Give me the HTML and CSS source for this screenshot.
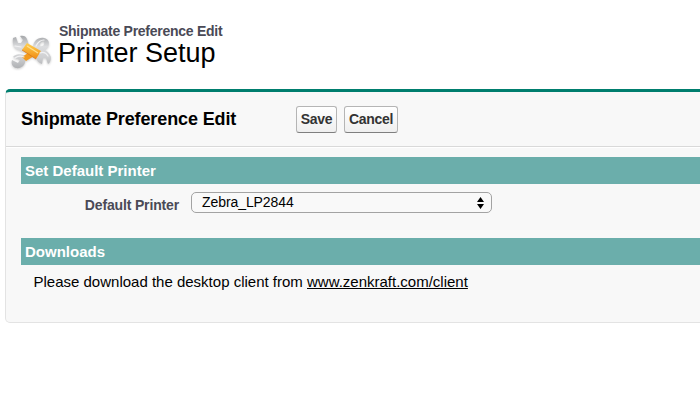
FILE: index.html
```html
<!DOCTYPE html>
<html lang="en">
<head>
<meta charset="utf-8">
<title>Printer Setup</title>
<link rel="stylesheet" href="styles.css">
</head>
<body>
<header class="page-header">
  <svg class="tools" viewBox="0 0 42 36" width="42" height="36" aria-hidden="true">
    <defs>
      <linearGradient id="steel" x1="0" y1="0" x2="0" y2="36" gradientUnits="userSpaceOnUse">
        <stop offset="0" stop-color="#9c9ea1"/><stop offset=".35" stop-color="#dcdddf"/><stop offset=".65" stop-color="#cfd0d2"/><stop offset="1" stop-color="#a9abae"/>
      </linearGradient>
      <linearGradient id="grip" x1="0" y1="0" x2="0" y2="1">
        <stop offset="0" stop-color="#ffcf50"/><stop offset="1" stop-color="#f08c14"/>
      </linearGradient>
    </defs>
    <path d="M23 14C23 7 28 3 34 4C39 5 40 9 38 13C36 16 31 18 27 18ZM30 10C29 12 30 13 32 12C34 12 35 10 34 8C33 7 31 8 30 10Z" fill="url(#steel)" fill-rule="evenodd"/>
    <path d="M15 26C16 31 11 35 6 34C2 33 1 29 2 26L8 29L10 26L3 23C6 19 12 20 16 22Z" fill="url(#steel)"/>
    <path d="M12 23L24 15L29 19L16 27Z" fill="#f29a1e"/>
    <path d="M3 4C2 11 4 15 9 16L13 18L19 11L17 5C16 2 13 1 10 2L13 6L11 9L8 9L6 3Z" fill="url(#steel)"/>
    <path d="M24 24L29 17C35 14 39 18 41 23C41 26 40 29 38 30L36 24L33 24L32 30C29 29 27 27 26 24Z" fill="url(#steel)"/>
    <path d="M17 9L31 17L26 25L12 16Z" fill="url(#grip)"/>
    <path d="M17 12L28 19" stroke="#ffe08a" stroke-width="1.3"/>
    <path d="M12 16L26 25" stroke="#d9781a" stroke-width=".8"/>
    <path d="M5 12L11 13M30 19Q35 17 38 22M5 24Q9 21 14 23M26 12Q29 6 34 6" fill="none" stroke="#f1f1f2" stroke-width="1.2" stroke-linecap="round"/>
  </svg>
  <div class="titles">
    <div class="eyebrow">Shipmate Preference Edit</div>
    <h1>Printer Setup</h1>
  </div>
</header>
<main class="panel">
  <div class="panel-head">
    <h2>Shipmate Preference Edit</h2>
    <button class="btn save">Save</button>
    <button class="btn cancel">Cancel</button>
  </div>
  <div class="panel-body">
    <h3>Set Default Printer</h3>
    <div class="field">
      <span class="label">Default Printer</span>
      <div class="select">
        <span>Zebra_LP2844</span>
        <svg viewBox="0 0 7 12" width="7" height="12" aria-hidden="true"><path d="M0 5L3.5 0L7 5ZM0 7H7L3.5 12Z"/></svg>
      </div>
    </div>
    <h3>Downloads</h3>
    <p>Please download the desktop client from <a>www.zenkraft.com/client</a></p>
  </div>
</main>
</body>
</html>
```
FILE: styles.css
```css
* { box-sizing: border-box; }
body {
  margin: 0;
  height: 420px;
  overflow: hidden;
  background: #fff;
  color: #000;
  font-family: "Liberation Sans", Arial, sans-serif;
}
h1, h2, h3, p { margin: 0; font-weight: normal; }
.page-header { display: flex; height: 89px; padding: 23px 0 0 10px; }
.tools { margin-top: 11px; flex: none; filter: drop-shadow(0 1px 1px rgba(0, 0, 0, .2)); }
.titles { margin-left: 6px; white-space: nowrap; }
.eyebrow { color: #4a4a56; font-size: 14px; font-weight: bold; line-height: 16px; letter-spacing: -.26px; margin-left: 1px; }
h1 { font-size: 27px; line-height: 28px; }
.panel {
  width: 710px;
  height: 234px;
  margin-left: 5px;
  border: 1px solid #e3e3e3;
  border-top: 3px solid #007e6e;
  border-radius: 5px;
  background: #f8f8f8;
}
.panel-head {
  display: flex;
  align-items: center;
  height: 55px;
  padding-left: 15px;
  border-bottom: 1px solid #d9d9d9;
  box-shadow: 0 1px #fff;
}
h2 { width: 275px; font-size: 18px; font-weight: bold; letter-spacing: -.12px; white-space: nowrap; }
.btn {
  height: 27px;
  padding: 0;
  border: 1px solid #b5b5b5;
  border-bottom-color: #7f7f7f;
  border-radius: 3px;
  background: linear-gradient(#fff, #efefef);
  color: #333;
  font: bold 14px "Liberation Sans", Arial, sans-serif;
  letter-spacing: -.3px;
}
.save { width: 41px; margin-right: 7px; }
.cancel { width: 54px; }
.panel-body { padding: 10px 0 0 15px; }
h3 {
  height: 27px;
  padding-left: 4px;
  background: #6baeab;
  color: #fff;
  font-size: 15px;
  font-weight: bold;
  line-height: 27px;
}
.field { display: flex; height: 54px; padding-top: 8px; }
.label { width: 158px; color: #4a4a56; font-size: 14px; font-weight: bold; letter-spacing: -.15px; line-height: 27px; text-align: right; }
.select {
  display: flex;
  justify-content: space-between;
  align-items: center;
  width: 301px;
  height: 21px;
  margin-left: 12px;
  padding: 0 7px 0 10px;
  border: 1px solid #a3a3a3;
  border-radius: 5px;
  background: #f9f9f9;
  font-size: 14px;
  letter-spacing: -.08px;
}
.select span { padding-bottom: 2px; }
p { padding: 8px 0 0 12.5px; font-size: 15px; line-height: 18px; }
a { text-decoration: underline; text-underline-offset: 1px; text-decoration-thickness: 1px; }
```
